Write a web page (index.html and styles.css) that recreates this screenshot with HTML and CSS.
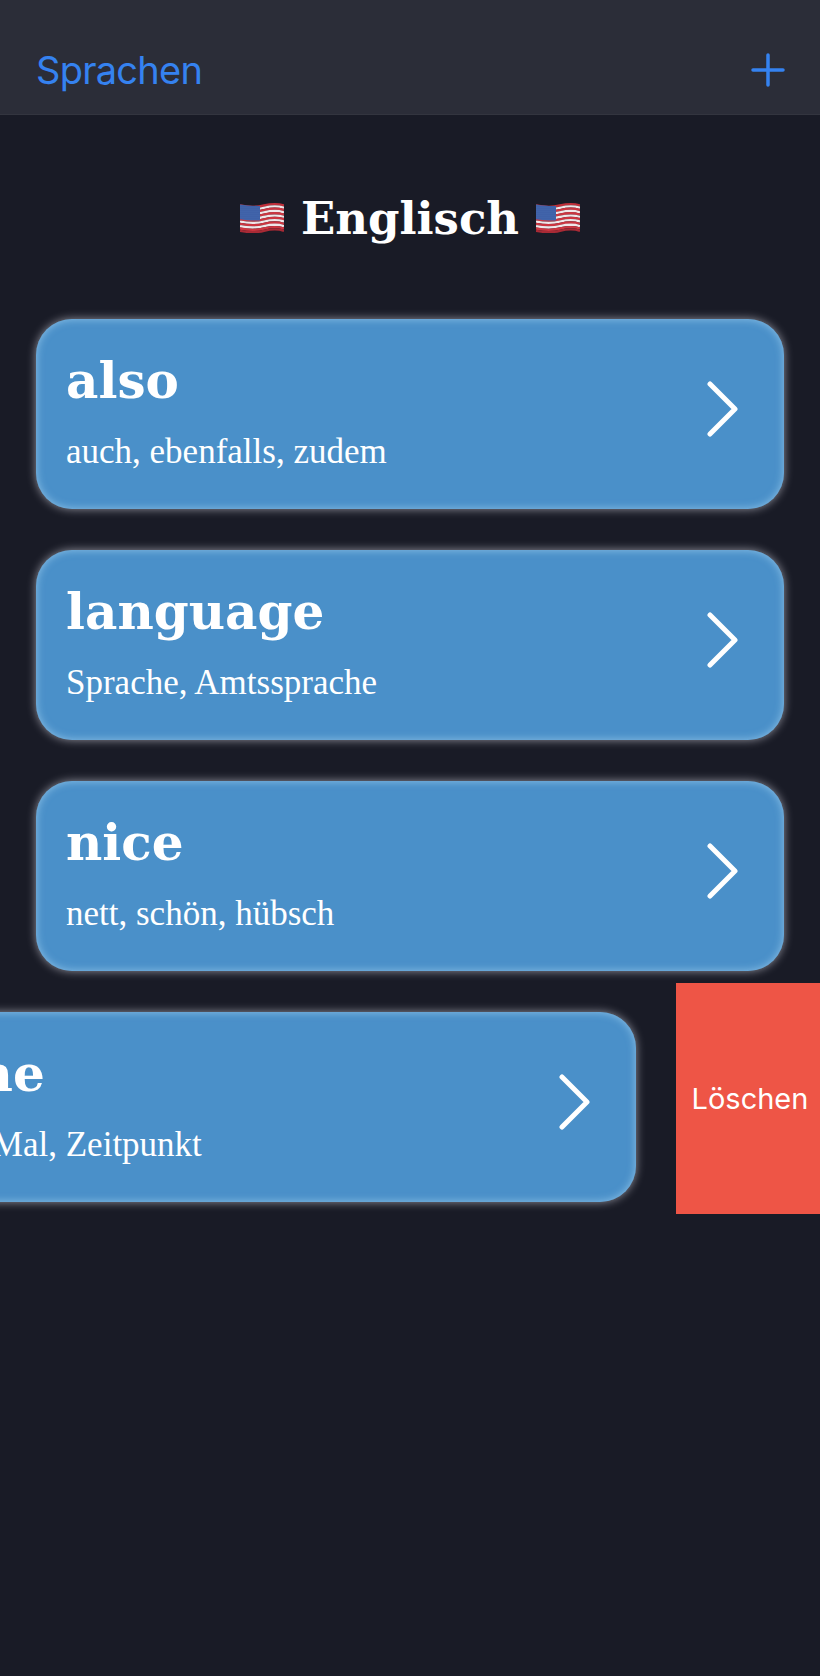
FILE: index.html
```html
<!DOCTYPE html>
<html lang="de">
<head>
<meta charset="utf-8">
<title>Englisch</title>
<link rel="stylesheet" href="styles.css">
</head>
<body>
<svg class="defs" width="0" height="0" aria-hidden="true">
  <defs>
    <pattern id="stars" width="2" height="2" patternUnits="userSpaceOnUse">
      <rect width="2" height="2" fill="#365aa4"/>
      <circle cx="1" cy="1" r="0.4" fill="#8fa5d4"/>
    </pattern>
    <path id="wave" d="M0 1C10 3 16 3 24 1S38-1 44 1" fill="none" stroke-width="2.35"/>
    <symbol id="flag" viewBox="0 0 44 31">
      <use href="#wave" y="2.5" stroke="#c02f3a"/>
      <use href="#wave" y="4.8" stroke="#efe6e8"/>
      <use href="#wave" y="7.1" stroke="#cc3540"/>
      <use href="#wave" y="9.4" stroke="#efe6e8"/>
      <use href="#wave" y="11.7" stroke="#cc3540"/>
      <use href="#wave" y="14" stroke="#efe6e8"/>
      <use href="#wave" y="16.3" stroke="#cc3540"/>
      <use href="#wave" y="18.6" stroke="#efe6e8"/>
      <use href="#wave" y="20.9" stroke="#cc3540"/>
      <use href="#wave" y="23.2" stroke="#efe6e8"/>
      <use href="#wave" y="25.5" stroke="#cc3540"/>
      <use href="#wave" y="27.8" stroke="#a82a35"/>
      <path d="M0 2.4C6 3.4 12 4 20 3.9V18.6C12 18.7 6 18.2 0 17.2Z" fill="url(#stars)"/>
    </symbol>
  </defs>
</svg>

<header class="nav">
  <a class="nav-back">Sprachen</a>
  <svg class="nav-add" viewBox="0 0 34 34" aria-label="Hinzufügen">
    <path d="M17 2V32M2 17H32"/>
  </svg>
</header>

<main>
  <h1 class="title">
    <svg class="flag"><use href="#flag"/></svg>
    <span>Englisch</span>
    <svg class="flag"><use href="#flag"/></svg>
  </h1>

  <section class="list">
    <div class="row">
      <article class="card">
        <div class="card-text">
          <div class="word">also</div>
          <div class="meaning">auch, ebenfalls, zudem</div>
        </div>
        <svg class="chevron" viewBox="0 0 32 58"><path d="M4 4L29 29L4 54"/></svg>
      </article>
    </div>
    <div class="row">
      <article class="card">
        <div class="card-text">
          <div class="word">language</div>
          <div class="meaning">Sprache, Amtssprache</div>
        </div>
        <svg class="chevron" viewBox="0 0 32 58"><path d="M4 4L29 29L4 54"/></svg>
      </article>
    </div>
    <div class="row">
      <article class="card">
        <div class="card-text">
          <div class="word">nice</div>
          <div class="meaning">nett, schön, hübsch</div>
        </div>
        <svg class="chevron" viewBox="0 0 32 58"><path d="M4 4L29 29L4 54"/></svg>
      </article>
    </div>
    <div class="row row-swiped">
      <article class="card">
        <div class="card-text">
          <div class="word">time</div>
          <div class="meaning">Zeit, Mal, Zeitpunkt</div>
        </div>
        <svg class="chevron" viewBox="0 0 32 58"><path d="M4 4L29 29L4 54"/></svg>
      </article>
      <button class="delete">Löschen</button>
    </div>
  </section>
</main>
</body>
</html>
```
FILE: styles.css
```css
* {
  box-sizing: border-box;
}

html,
body {
  margin: 0;
  padding: 0;
}

body {
  width: 820px;
  height: 1676px;
  overflow: hidden;
  background: #191b26;
  font-family: "Liberation Serif", serif;
  color: #fff;
}

.defs {
  display: block;
  height: 0;
}

.nav {
  height: 115px;
  padding: 44px 36px 0;
  display: flex;
  align-items: flex-start;
  justify-content: space-between;
  background: #2b2d38;
  border-bottom: 1px solid #33353f;
}

.nav-back {
  font-family: Inter, sans-serif;
  font-size: 38px;
  letter-spacing: -0.75px;
  line-height: 52px;
  color: #3582f0;
}

.nav-add {
  width: 34px;
  height: 34px;
  margin-top: 9px;
  margin-right: -1px;
}

.nav-add path {
  fill: none;
  stroke: #3582f0;
  stroke-width: 3.5px;
  stroke-linecap: round;
}

.title {
  height: 175px;
  margin: 0;
  padding-top: 72px;
  display: flex;
  align-items: flex-start;
  justify-content: center;
  gap: 17px;
  font-family: "DejaVu Serif", serif;
  font-size: 45px;
  line-height: 64px;
  font-weight: 700;
}

.flag {
  width: 44px;
  height: 31px;
  margin-top: 15px;
}

.row {
  height: 231px;
  padding: 29px 36px 12px;
  display: flex;
  overflow: hidden;
}

.row-swiped {
  padding: 29px 0 12px;
}

.card {
  flex: 0 0 748px;
  height: 190px;
  padding: 0 46px 0 30px;
  display: flex;
  align-items: center;
  justify-content: space-between;
  background: #4a90c9;
  border-radius: 36px;
  box-shadow: 0 0 10px rgba(226, 226, 236, 0.6), inset 0 0 8px rgba(170, 215, 245, 0.7);
}

.row-swiped .card {
  margin-left: -112px;
}

.card-text {
  display: flex;
  flex-direction: column;
  margin-bottom: 4px;
}

.word {
  font-family: "DejaVu Serif", serif;
  font-size: 50px;
  line-height: 62px;
  font-weight: 700;
  white-space: nowrap;
}

.meaning {
  margin-top: 18px;
  font-size: 35px;
  line-height: 44px;
  white-space: nowrap;
}

.chevron {
  width: 32px;
  height: 58px;
  margin-bottom: 10px;
}

.chevron path {
  fill: none;
  stroke: #fff;
  stroke-width: 5px;
  stroke-linecap: round;
  stroke-linejoin: round;
}

.delete {
  flex: 0 0 144px;
  height: 231px;
  margin: -29px 0 0 40px;
  padding: 0 0 0 4px;
  border: 0;
  background: #ee5546;
  color: #fff;
  font-family: Inter, sans-serif;
  font-size: 29px;
}
```
